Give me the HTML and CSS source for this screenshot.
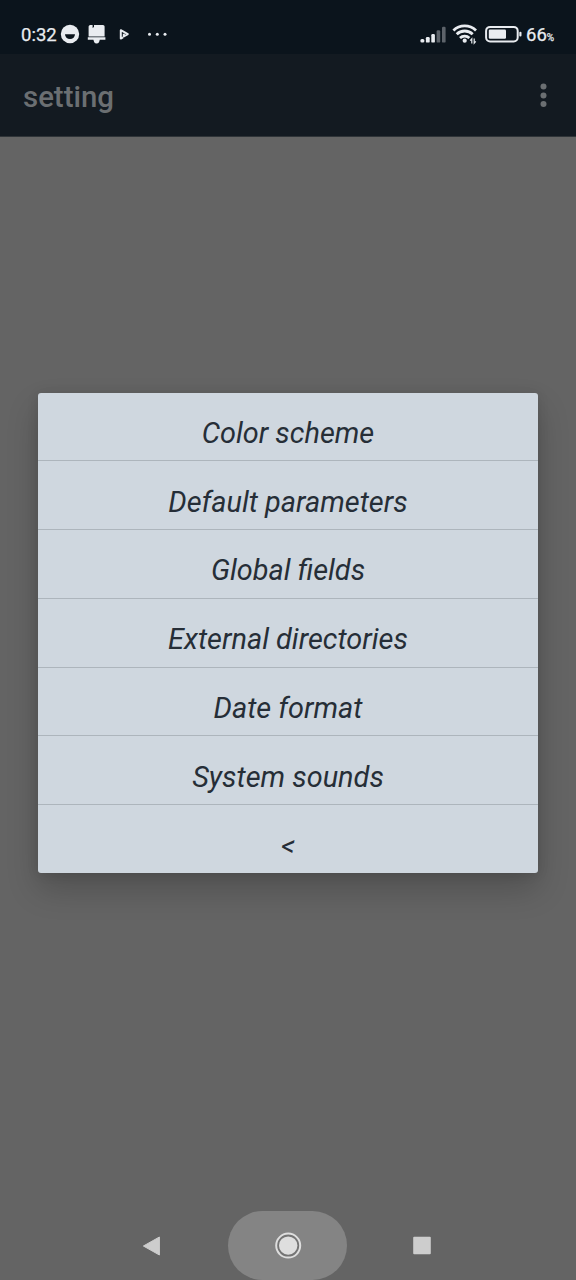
FILE: index.html
```html
<!DOCTYPE html>
<html lang="en">
<head>
    <meta charset="UTF-8">
    <meta name="viewport" content="width=device-width, initial-scale=1.0">
    <title>setting</title>
    <link rel="stylesheet" href="styles.css">
</head>
<body>

    <div class="status-bar">
        <span class="clock">0:32</span>
        <svg class="notifications" width="110" height="24" viewBox="0 0 110 24">
            <circle cx="10" cy="12" r="9.2" fill="#e9ecf0"/>
            <path d="M5 12.3h10a5 4.8 0 0 1-10 0z" fill="#0c151d"/>
            <path d="M30.4 3h2.2v3l1.4-1V3H43a1.6 1.6 0 0 1 1.6 1.6v9.8h-16V4.6A1.7 1.7 0 0 1 30.4 3zM27.8 15.2h17.6v2.6h-5.6l-.8 2.4a2.8 2.8 0 0 1-4.8 0l-.8-2.4h-5.6z" fill="#e9ecf0"/>
            <path d="M60.8 16.8V8.2l7 3.9-4 2.3v-2.6M60.8 8.2v8.4l2.2-1.2" fill="none" stroke="#e9ecf0" stroke-width="2" stroke-linejoin="round"/>
            <g fill="#e9ecf0">
                <circle cx="89.5" cy="12.2" r="1.5"/>
                <circle cx="97.3" cy="12.2" r="1.5"/>
                <circle cx="105" cy="12.2" r="1.5"/>
            </g>
        </svg>
        <svg class="indicators" width="104" height="24" viewBox="0 0 104 24">
            <g fill="#e9ecf0">
                <rect x="0.4" y="17" width="4" height="3.6" rx="1.5"/>
                <rect x="5.9" y="15" width="3.8" height="5.6" rx="1.2"/>
                <rect x="11.3" y="12" width="3.6" height="8.6" rx="1.2"/>
            </g>
            <g fill="#5d636a">
                <rect x="16.6" y="8.2" width="3.6" height="12.4" rx="1.2"/>
                <rect x="22" y="4.8" width="3.6" height="15.8" rx="1.2"/>
            </g>
            <g fill="none" stroke="#e9ecf0" stroke-width="2.8">
                <path d="M33.4 8.4a16.2 16.2 0 0 1 22.6 0"/>
                <path d="M36.7 12.3a11.4 11.4 0 0 1 16 0"/>
                <path d="M40 16a6.8 6.8 0 0 1 9.4 0"/>
            </g>
            <circle cx="44.7" cy="18.7" r="2.1" fill="#e9ecf0"/>
            <path d="M51.8 21.4v-4.6l-1.6 1.8M54.2 16.6v4.6l1.6-1.8" fill="none" stroke="#e9ecf0" stroke-width="1.2"/>
            <rect x="66.1" y="4.9" width="31.6" height="14.6" rx="4" fill="none" stroke="#e9ecf0" stroke-width="2"/>
            <rect x="68.8" y="7.6" width="17.2" height="9.2" rx="1.2" fill="#e9ecf0"/>
            <rect x="99.3" y="9.8" width="2.2" height="4.8" rx="1" fill="#e9ecf0"/>
        </svg>
        <span class="battery-level">66<small>%</small></span>
    </div>

    <header class="app-bar">
        <h1>setting</h1>
        <svg class="menu-icon" width="8" height="26" viewBox="0 0 8 26" fill="#6b6f72">
            <circle cx="3.5" cy="4.6" r="3"/>
            <circle cx="3.5" cy="13.4" r="3"/>
            <circle cx="3.5" cy="22.1" r="3"/>
        </svg>
    </header>

    <main class="content">
        <ul class="dialog">
            <li>Color scheme</li>
            <li>Default parameters</li>
            <li>Global fields</li>
            <li>External directories</li>
            <li>Date format</li>
            <li>System sounds</li>
            <li>&lt;</li>
        </ul>
    </main>

    <nav class="nav-bar">
        <div class="nav-item">
            <svg width="20" height="22" viewBox="0 0 20 22">
                <path d="M17.4 2v18L1.4 11z" fill="#cdcdcd" stroke="#cdcdcd" stroke-width="1" stroke-linejoin="round"/>
            </svg>
        </div>
        <div class="nav-item home">
            <svg width="28" height="28" viewBox="0 0 28 28">
                <circle cx="14.2" cy="13.6" r="12" fill="#747474" stroke="#dedede" stroke-width="2"/>
                <circle cx="14.2" cy="13.6" r="9.2" fill="#dedede"/>
            </svg>
        </div>
        <div class="nav-item recent">
            <svg width="20" height="20" viewBox="0 0 20 20">
                <rect x="0.2" y="0.8" width="17.6" height="17.4" rx="1" fill="#cdcdcd"/>
            </svg>
        </div>
    </nav>

</body>
</html>
```

FILE: styles.css
```css
* {
    margin: 0;
    padding: 0;
    box-sizing: border-box;
}

body {
    display: flex;
    flex-direction: column;
    height: 1280px;
    overflow: hidden;
    background-color: #646464;
    font-family: Roboto, sans-serif;
}

svg {
    display: block;
}

/* Status bar */
.status-bar {
    display: flex;
    align-items: center;
    height: 54px;
    padding: 14px 21px 0 21px;
    background-color: #0b141c;
    color: #e9ecf0;
}

.clock {
    width: 39px;
    font-size: 18.5px;
    line-height: 24px;
}

.indicators {
    margin: 0 2px 0 auto;
}

.clock,
.battery-level {
    padding-top: 2px;
    -webkit-text-stroke: 0.25px #e9ecf0;
}

.battery-level {
    width: 29px;
    padding-top: 4px;
    font-size: 18.5px;
    line-height: 24px;
    white-space: nowrap;
}

.battery-level small {
    font-size: 10px;
}

/* App bar */
.app-bar {
    display: flex;
    align-items: center;
    justify-content: space-between;
    height: 83px;
    padding: 0 28px 0 23px;
    background-color: #131a21;
    border-bottom: 1px solid #2f3438;
    color: #6b6f72;
}

.app-bar h1 {
    padding-top: 3px;
    font-size: 29.4px;
    font-weight: 500;
}

/* Dialog */
.content {
    flex: 1;
    padding: 255.5px 38px 0;
}

.dialog {
    display: grid;
    grid-template-rows: repeat(7, 68.8px);
    height: 480px;
    border-radius: 3px;
    background-color: #cfd7df;
    box-shadow: 0 16px 32px rgba(0, 0, 0, 0.2), 0 1px 12px rgba(0, 0, 0, 0.1);
    list-style: none;
}

.dialog li {
    padding-top: 13.4px;
    border-bottom: 1px solid #adb5bc;
    color: #262e37;
    font-size: 28.9px;
    font-style: italic;
    line-height: 54px;
    text-align: center;
}

.dialog li:last-child {
    border-bottom: none;
}

/* Navigation bar */
.nav-bar {
    display: flex;
    justify-content: center;
    height: 69px;
    padding-right: 1px;
}

.nav-item {
    display: flex;
    align-items: center;
    justify-content: center;
    width: 153px;
}

.nav-item.home {
    width: 119px;
    border-radius: 35px;
    background-color: #848484;
}

.nav-item.recent {
    width: 151px;
    margin-right: 2px;
}
```
